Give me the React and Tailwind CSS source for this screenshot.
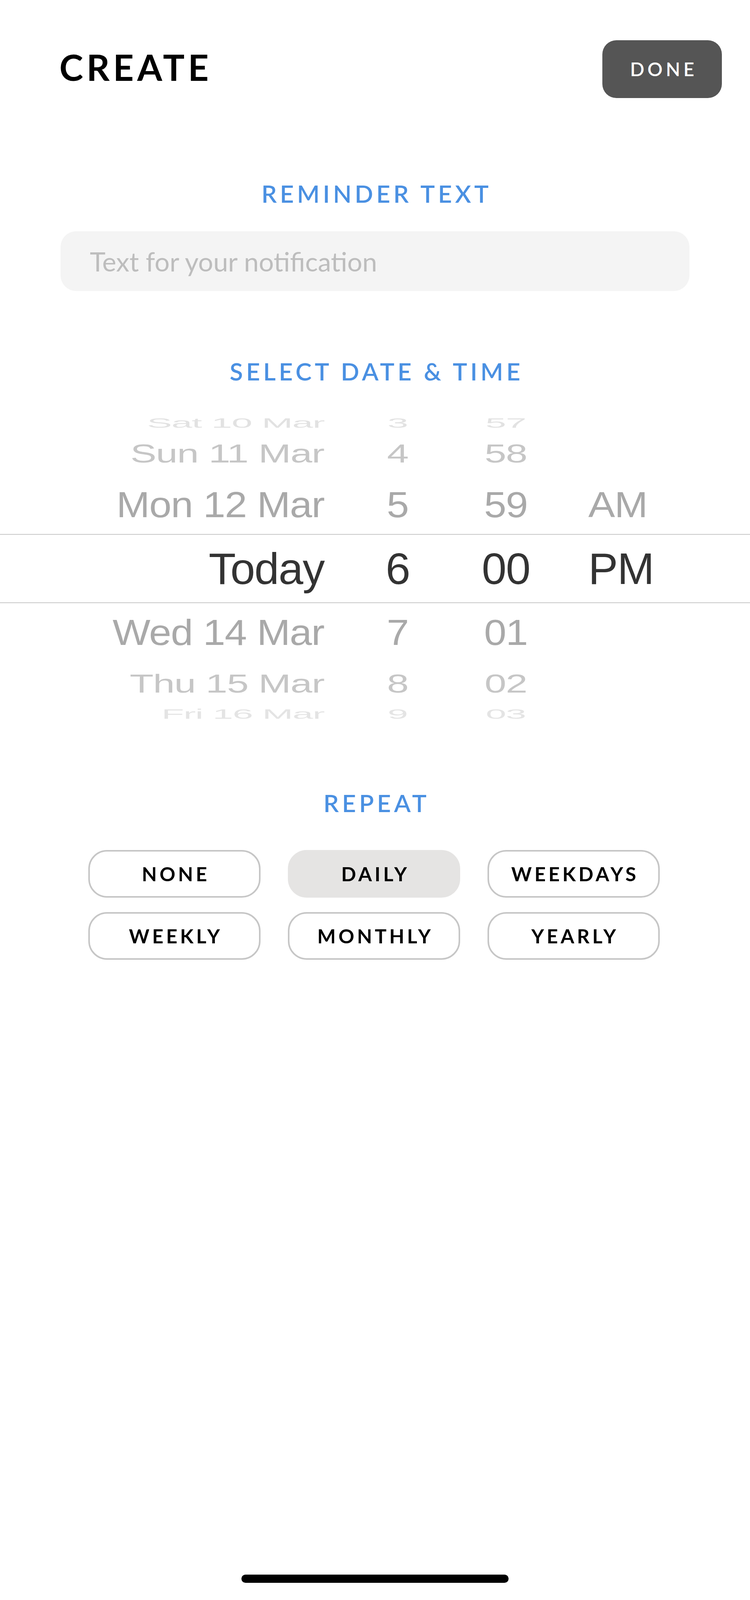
export default function App() {
  // picker rows, top to bottom, the wheel is faked with scale + colour
  const rows = [
    { date: "Sat 10 Mar", hour: "3", min: "57", ap: "", box: "h-[44px]", txt: "text-[#e2e2e2] scale-x-[0.84] scale-y-[0.3]" },
    { date: "Sun 11 Mar", hour: "4", min: "58", ap: "", box: "h-[112px]", txt: "text-[#c6c6c6] scale-x-[0.88] scale-y-[0.58]" },
    { date: "Mon 12 Mar", hour: "5", min: "59", ap: "AM", box: "h-[150px]", txt: "text-[#a9a9a9] scale-x-[0.9] scale-y-[0.81]" },
    { date: "Today", hour: "6", min: "00", ap: "PM", box: "h-[177px] border-y-2 border-[#c8c8c8]", txt: "text-[#333333]" },
    { date: "Wed 14 Mar", hour: "7", min: "01", ap: "", box: "h-[150px]", txt: "text-[#a9a9a9] scale-x-[0.9] scale-y-[0.81]" },
    { date: "Thu 15 Mar", hour: "8", min: "02", ap: "", box: "h-[112px]", txt: "text-[#c6c6c6] scale-x-[0.88] scale-y-[0.58]" },
    { date: "Fri 16 Mar", hour: "9", min: "03", ap: "", box: "h-[44px]", txt: "text-[#e4e4e4] scale-x-[0.83] scale-y-[0.3]" },
  ];

  const repeat = ["NONE", "DAILY", "WEEKDAYS", "WEEKLY", "MONTHLY", "YEARLY"];

  return (
    <div className="w-full min-h-screen bg-white flex flex-col font-['Lato',sans-serif]">

      {/* Header */}
      <div className="flex items-center justify-between pt-[103px] pl-[152px] pr-[72px]">
        <h1 className="mt-[-10px] text-[92px] leading-none font-bold tracking-[0.095em] text-black">
          CREATE
        </h1>
        <button className="w-[306px] h-[148px] rounded-[36px] bg-[#555555] text-white text-[48px] leading-none font-semibold tracking-[0.17em] pl-[0.17em]">
          DONE
        </button>
      </div>

      {/* Reminder text */}
      <h2 className="mt-[213px] text-center text-[62px] leading-none font-semibold tracking-[0.13em] pl-[0.13em] text-[#4a90e2]">
        REMINDER TEXT
      </h2>
      <input
        type="text"
        placeholder="Text for your notification"
        className="mt-[66px] mx-[155px] h-[153px] rounded-[40px] bg-[#f4f4f4] pl-[75px] text-[68px] text-[#333333] placeholder:text-[#bdbdbd] outline-none"
      />

      {/* Date & time */}
      <h2 className="mt-[174px] text-center text-[62px] leading-none font-semibold tracking-[0.13em] pl-[0.13em] text-[#4a90e2]">
        SELECT DATE &amp; TIME
      </h2>

      <div className="mt-[80px] flex flex-col overflow-hidden font-['Liberation_Sans',Arial,sans-serif] text-[114px] leading-none tracking-[-0.015em]">
        {rows.map((r) => (
          <div key={r.date} className={`flex items-center ${r.box}`}>
            <div className="w-[830px] text-right">
              <span className={`inline-block origin-right whitespace-nowrap ${r.txt}`}>{r.date}</span>
            </div>
            <div className="w-[376px] text-center">
              <span className={`inline-block origin-center ${r.txt}`}>{r.hour}</span>
            </div>
            <div className="w-[178px] text-center">
              <span className={`inline-block origin-center ${r.txt}`}>{r.min}</span>
            </div>
            <div className="pl-[122px] text-left">
              <span className={`inline-block origin-left ${r.txt}`}>{r.ap}</span>
            </div>
          </div>
        ))}
      </div>

      {/* Repeat */}
      <h2 className="mt-[174px] text-center text-[62px] leading-none font-semibold tracking-[0.13em] pl-[0.13em] text-[#4a90e2]">
        REPEAT
      </h2>
      <div className="mt-[90px] ml-[226px] w-[1463px] grid grid-cols-3 gap-x-[70px] gap-y-[37px]">
        {repeat.map((item) => (
          <button
            key={item}
            className={`h-[122px] rounded-[48px] border-4 text-[50px] leading-none font-bold tracking-[0.14em] pl-[0.14em] text-black ${
              item === "DAILY" ? "bg-[#e5e4e3] border-[#e5e4e3]" : "bg-white border-[#c6c6c6]"
            }`}
          >
            {item}
          </button>
        ))}
      </div>

      {/* Home indicator */}
      <div className="mt-auto mb-[44px] mx-auto w-[684px] h-[21px] rounded-full bg-black" />
    </div>
  );
}
